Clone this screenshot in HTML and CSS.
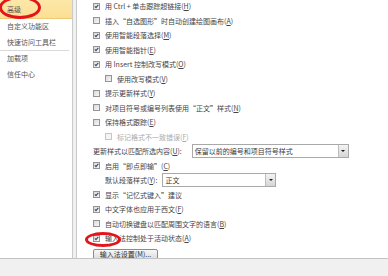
FILE: index.html
```html
<!DOCTYPE html>
<html lang="zh-CN">
<head>
<meta charset="utf-8">
<link rel="stylesheet" href="styles.css">
</head>
<body>
<div class="dialog">
  <div class="main">
    <nav class="nav">
      <div class="nav-item selected">高级</div>
      <div class="nav-item">自定义功能区</div>
      <div class="nav-item">快速访问工具栏</div>
      <div class="nav-sep"></div>
      <div class="nav-item">加载项</div>
      <div class="nav-item">信任中心</div>
      <span class="mark mark-top"></span>
    </nav>
    <div class="content">
      <div class="opts">
        <div class="row"><span class="cb"><svg viewBox="0 0 5 5"><path d="M0.8 2.4 L2 3.7 L4.3 0.9"/></svg></span><span>用 Ctrl + 单击跟踪超链接(<u>H</u>)</span></div>
        <div class="row"><span class="cb"></span><span>插入“自选图形”时自动创建绘图画布(<u>A</u>)</span></div>
        <div class="row"><span class="cb"><svg viewBox="0 0 5 5"><path d="M0.8 2.4 L2 3.7 L4.3 0.9"/></svg></span><span>使用智能段落选择(<u>M</u>)</span></div>
        <div class="row"><span class="cb"><svg viewBox="0 0 5 5"><path d="M0.8 2.4 L2 3.7 L4.3 0.9"/></svg></span><span>使用智能指针(<u>E</u>)</span></div>
        <div class="row"><span class="cb"><svg viewBox="0 0 5 5"><path d="M0.8 2.4 L2 3.7 L4.3 0.9"/></svg></span><span>用 Insert 控制改写模式(<u>O</u>)</span></div>
        <div class="row indent"><span class="cb"></span><span>使用改写模式(<u>V</u>)</span></div>
        <div class="row"><span class="cb"></span><span>提示更新样式(<u>Y</u>)</span></div>
        <div class="row"><span class="cb"></span><span>对项目符号或编号列表使用“正文”样式(<u>N</u>)</span></div>
        <div class="row"><span class="cb"></span><span>保持格式跟踪(<u>E</u>)</span></div>
        <div class="row indent disabled"><span class="cb"></span><span>标记格式不一致错误(<u>F</u>)</span></div>
        <div class="row"><span>更新样式以匹配所选内容(<u>U</u>):</span><span class="select wide"><span class="sel-text">保留以前的编号和项目符号样式</span><span class="sel-btn"><span class="tri"></span></span></span></div>
        <div class="row"><span class="cb"><svg viewBox="0 0 5 5"><path d="M0.8 2.4 L2 3.7 L4.3 0.9"/></svg></span><span>启用“即点即输”(<u>C</u>)</span></div>
        <div class="row indent label-row"><span>默认段落样式(<u>Y</u>):</span><span class="select narrow"><span class="sel-text">正文</span><span class="sel-btn"><span class="tri"></span></span></span></div>
        <div class="row"><span class="cb"><svg viewBox="0 0 5 5"><path d="M0.8 2.4 L2 3.7 L4.3 0.9"/></svg></span><span>显示“记忆式键入”建议</span></div>
        <div class="row"><span class="cb"><svg viewBox="0 0 5 5"><path d="M0.8 2.4 L2 3.7 L4.3 0.9"/></svg></span><span>中文字体也应用于西文(<u>F</u>)</span></div>
        <div class="row"><span class="cb"></span><span>自动切换键盘以匹配周围文字的语言(<u>B</u>)</span></div>
        <div class="row ime"><span class="cb"><svg viewBox="0 0 5 5"><path d="M0.8 2.4 L2 3.7 L4.3 0.9"/></svg></span><span>输入法控制处于活动状态(<u>A</u>)</span><span class="mark mark-ime"></span></div>
      </div>
      <div class="btn">输入法设置(<u>M</u>)...</div>
    </div>
  </div>
  <div class="footer"></div>
</div>
</body>
</html>
```

FILE: styles.css
```css
* { box-sizing: border-box; }
html, body { margin: 0; padding: 0; }
body {
  width: 388px;
  height: 276px;
  overflow: hidden;
  background: #f0f0f0;
  font-family: "Noto Sans CJK SC", "Liberation Sans", sans-serif;
  font-size: 7px;
  color: #444;
}
u { text-decoration: underline; text-underline-offset: 1px; }
.dialog { display: flex; flex-direction: column; height: 276px; }
.main { display: flex; height: 258px; gap: 3px; overflow: hidden; }

.nav {
  position: relative;
  width: 73px;
  flex: none;
  background: #fff;
  border-right: 1px solid #c9c9c9;
}
.nav-item {
  height: 15.5px;
  line-height: 15.5px;
  padding-left: 7px;
  color: #555;
  white-space: nowrap;
}
.nav-item.selected {
  height: 19px;
  line-height: 18px;
  background: linear-gradient(#fde8a9, #fbdf94);
  border-bottom: 1px solid #ecca77;
}
.nav-sep { height: 1px; background: #d9d9d9; margin-right: 3px; }

.mark {
  position: absolute;
  border: 3px solid #e4141b;
  border-radius: 50%;
  pointer-events: none;
}
.mark-top { left: -1px; top: -4px; width: 42px; height: 23px; }

.content {
  flex: 1;
  background: #fff;
  border-left: 1px solid #c9c9c9;
  padding-left: 16px;
}
.opts { margin-top: -1px; }
.row {
  display: flex;
  align-items: center;
  gap: 5px;
  height: 14.5px;
  white-space: nowrap;
}
.row.indent { padding-left: 12px; }
.row.label-row { gap: 0; }
.row.disabled { color: #ababab; }

.cb {
  flex: none;
  width: 7px;
  height: 7px;
  border: 1px solid #949494;
  background: linear-gradient(135deg, #dadada, #f7f7f7);
  display: flex;
  align-items: center;
  justify-content: center;
}
.cb svg { width: 5px; height: 5px; display: block; }
.cb path { fill: none; stroke: #3c4a66; stroke-width: 1.1; }
.disabled .cb { border-color: #c6c6c6; background: #f5f5f5; }

.select {
  display: flex;
  height: 14px;
  margin-left: 5px;
  border: 1px solid #a9a9a9;
  background: #fff;
}
.select.wide { width: 157px; }
.select.narrow { width: 114px; }
.sel-text { flex: 1; padding-left: 2px; line-height: 12px; color: #3a3a3a; }
.sel-btn {
  width: 10px;
  border-left: 1px solid #bdbdbd;
  background: linear-gradient(#f4f4f4, #d5d5d5);
  display: flex;
  align-items: center;
  justify-content: center;
}
.tri {
  width: 0;
  height: 0;
  border-left: 2px solid transparent;
  border-right: 2px solid transparent;
  border-top: 2px solid #1e1e1e;
}

.ime { position: relative; }
.mark-ime { left: -8px; top: 1px; width: 36px; height: 15px; }

.btn {
  margin-top: 3px;
  width: 65px;
  height: 11px;
  border: 1px solid #8c8c8c;
  border-radius: 2px;
  background: linear-gradient(#f7f7f7, #dcdcdc);
  line-height: 9px;
  text-align: center;
  white-space: nowrap;
  color: #333;
}

.footer {
  flex: 1;
  border-top: 1px solid #c4c4c4;
  background: #f0f0f0;
}
```
